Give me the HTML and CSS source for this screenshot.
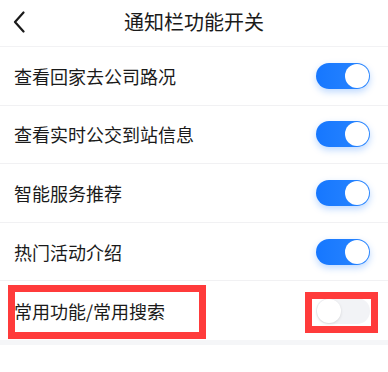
FILE: index.html
```html
<!DOCTYPE html>
<html lang="zh-CN">
<head>
<meta charset="utf-8">
<link rel="stylesheet" href="styles.css">
</head>
<body>
<div class="page">
  <header class="nav">
    <svg class="back" width="12" height="22" viewBox="0 0 12 22"><path d="M10.5 1.5 L2 11 L10.5 20.5" fill="none" stroke="#1a1a1a" stroke-width="2.2" stroke-linecap="round" stroke-linejoin="round"/></svg>
    <h1 class="title">通知栏功能开关</h1>
  </header>
  <ul class="list">
    <li class="row"><span class="label">查看回家去公司路况</span><span class="switch on"><span class="knob"></span></span></li>
    <li class="row"><span class="label">查看实时公交到站信息</span><span class="switch on"><span class="knob"></span></span></li>
    <li class="row"><span class="label">智能服务推荐</span><span class="switch on"><span class="knob"></span></span></li>
    <li class="row"><span class="label">热门活动介绍</span><span class="switch on"><span class="knob"></span></span></li>
    <li class="row"><span class="label">常用功能/常用搜索</span><span class="switch off"><span class="knob"></span></span></li>
  </ul>
  <div class="gap"></div>
  <div class="mark mark-label"></div>
  <div class="mark mark-switch"></div>
</div>
</body>
</html>
```
FILE: styles.css
```css
* { box-sizing: border-box; margin: 0; padding: 0; }
html, body { background: #fff; }
body {
  font-family: "Noto Sans CJK SC", "Noto Sans", sans-serif;
  color: #1a1a1a;
}
.page {
  position: relative;
  width: 388px;
  height: 372px;
  overflow: hidden;
}
.nav {
  position: relative;
  height: 47px;
  display: flex;
  align-items: center;
  justify-content: center;
  border-bottom: 1px solid #f2f2f4;
}
.back {
  position: absolute;
  left: 13px;
  top: 11px;
}
.title {
  font-size: 20px;
  font-weight: 400;
  line-height: 1;
  margin-top: -2px;
}
.list { list-style: none; }
.row {
  height: 58.6px;
  display: flex;
  align-items: center;
  justify-content: space-between;
  padding: 0 18px 0 14px;
  border-bottom: 1px solid #f1f1f3;
}
.row:last-child { border-bottom: none; }
.label {
  font-size: 18px;
  line-height: 1;
}
.switch {
  position: relative;
  width: 54px;
  height: 26px;
  border-radius: 13px;
  display: flex;
  align-items: center;
  padding: 0 1px;
}
.switch.on {
  background: linear-gradient(90deg, #1677ff, #2a86ff);
  box-shadow: 0 3px 7px rgba(22, 119, 255, 0.28);
  justify-content: flex-end;
}
.switch.off {
  background: #f2f3f6;
  justify-content: flex-start;
}
.knob {
  width: 24px;
  height: 24px;
  border-radius: 50%;
  background: #fff;
}
.switch.off .knob {
  box-shadow: 0 1px 3px rgba(0, 0, 0, 0.12);
}
.gap {
  height: 5px;
  background: #f5f6f8;
}
.mark {
  position: absolute;
  border: 7px solid #ff3b3b;
}
.mark-label {
  left: 8px;
  top: 285px;
  width: 198px;
  height: 54px;
}
.mark-switch {
  left: 305px;
  top: 292px;
  width: 73px;
  height: 41px;
}
```
